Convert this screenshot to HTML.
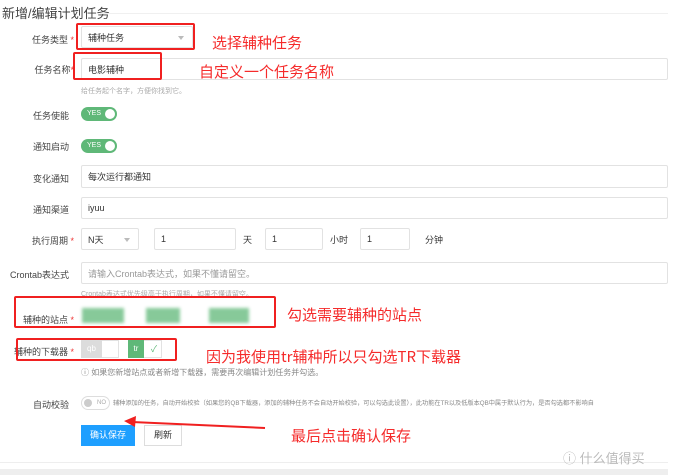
<!DOCTYPE html>
<html><head><meta charset="utf-8"><style>
*{margin:0;padding:0;box-sizing:border-box}
body{width:686px;height:475px;background:#fff;position:relative;overflow:hidden;font-family:"Liberation Sans","Noto Sans CJK SC",sans-serif;color:#333}
.a{position:absolute;white-space:nowrap}
.lbl{position:absolute;font-size:9px;color:#444;text-align:right;width:100px;left:-26px;white-space:nowrap}
.star{color:#e33}
.inp{position:absolute;border:1px solid #e2e2e2;border-radius:2px;background:#fff;font-size:9px;color:#333;padding-left:6px;display:flex;align-items:center}
.red{position:absolute;border:2px solid #f02020;border-radius:2px}
.ann{position:absolute;color:#f52b2b;font-size:15px;white-space:nowrap;font-family:"Noto Sans CJK SC",sans-serif}
.tog{position:absolute;border-radius:8px;background:#5fb878;height:14px;width:36px;font-size:7px;color:#fff;padding-left:6px;line-height:14px}
.tog:after{content:"";position:absolute;right:2px;top:2px;width:10px;height:10px;border-radius:50%;background:#fff}
.hint{position:absolute;font-size:7px;color:#aaa;white-space:nowrap}
.g{position:absolute;background:#5fb878;opacity:.75;filter:blur(1.5px)}
</style></head><body>
<div class="a" style="left:2px;top:3px;font-size:13px;color:#444">新增/编辑计划任务</div>
<div class="a" style="left:100px;width:568px;top:13px;height:1px;background:#f0f0f0"></div>

<div class="lbl" style="top:33px">任务类型 <span class="star">*</span></div>
<div class="inp" style="left:81px;top:26px;width:112px;height:22px">辅种任务<span style="position:absolute;right:8px;top:9px;border:3px solid transparent;border-top:4px solid #bbb"></span></div>
<div class="lbl" style="top:63px">任务名称<span class="star">*</span></div>
<div class="inp" style="left:81px;top:58px;width:587px;height:22px">电影辅种</div>
<div class="hint" style="left:81px;top:86px">给任务起个名字，方便你找到它。</div>
<div class="lbl" style="top:109px">任务使能&nbsp;&nbsp;</div>
<div class="tog" style="left:81px;top:107px">YES</div>
<div class="lbl" style="top:140px">通知启动&nbsp;&nbsp;</div>
<div class="tog" style="left:81px;top:139px">YES</div>
<div class="lbl" style="top:172px">变化通知&nbsp;&nbsp;</div>
<div class="inp" style="left:81px;top:165px;width:587px;height:23px">每次运行都通知</div>
<div class="lbl" style="top:203px">通知渠道&nbsp;&nbsp;</div>
<div class="inp" style="left:81px;top:197px;width:587px;height:22px">iyuu</div>
<div class="lbl" style="top:234px">执行周期 <span class="star">*</span></div>
<div class="inp" style="left:81px;top:228px;width:58px;height:22px">N天<span style="position:absolute;right:8px;top:9px;border:3px solid transparent;border-top:4px solid #bbb"></span></div>
<div class="inp" style="left:154px;top:228px;width:82px;height:22px">1</div>
<div class="a" style="left:243px;top:233px;font-size:9px">天</div>
<div class="inp" style="left:265px;top:228px;width:58px;height:22px">1</div>
<div class="a" style="left:330px;top:233px;font-size:9px">小时</div>
<div class="inp" style="left:360px;top:228px;width:50px;height:22px">1</div>
<div class="a" style="left:425px;top:233px;font-size:9px">分钟</div>
<div class="lbl" style="top:268px">Crontab表达式&nbsp;&nbsp;</div>
<div class="inp" style="left:81px;top:262px;width:587px;height:22px;color:#999">请输入Crontab表达式，如果不懂请留空。</div>
<div class="hint" style="left:81px;top:289px">Crontab表达式优先级高于执行周期，如果不懂请留空。</div>
<div class="lbl" style="top:313px">辅种的站点 <span class="star">*</span></div>
<div class="g" style="left:82px;top:308px;width:42px;height:15px"></div>
<div class="g" style="left:146px;top:308px;width:34px;height:15px"></div>
<div class="g" style="left:209px;top:308px;width:40px;height:15px"></div>
<div class="lbl" style="top:345px">辅种的下载器 <span class="star">*</span></div>
<div class="a" style="left:81px;top:340px;width:38px;height:18px;border:1px solid #e2e2e2"></div>
<div class="a" style="left:81px;top:340px;width:21px;height:18px;background:#dcdcdc;color:#fff;font-size:8px;text-align:center;line-height:18px">qb</div>
<div class="a" style="left:128px;top:340px;width:34px;height:18px;border:1px solid #e2e2e2;color:#5fb878;font-size:9px;text-align:right;padding-right:4px;line-height:16px">✓</div>
<div class="a" style="left:128px;top:340px;width:16px;height:18px;background:#5fb878;color:#fff;font-size:8px;text-align:center;line-height:18px">tr</div>
<div class="hint" style="left:81px;top:367px;font-size:8px;color:#888">ⓘ 如果您新增站点或者新增下载器，需要再次编辑计划任务并勾选。</div>
<div class="lbl" style="top:398px">自动校验&nbsp;&nbsp;</div>
<div class="a" style="left:81px;top:396px;width:29px;height:14px;border:1px solid #ddd;border-radius:8px;font-size:6px;color:#aaa;padding-left:15px;line-height:12px">NO</div>
<div class="a" style="left:84px;top:399px;width:8px;height:8px;border-radius:50%;background:#ccc"></div>
<div class="hint" style="left:113px;top:398px;font-size:6.2px;color:#888">辅种添加的任务，自动开始校验（如果您的QB下载器，添加的辅种任务不会自动开始校验，可以勾选此设置），此功能在TR以及低版本QB中属于默认行为，是否勾选都不影响自</div>
<div class="a" style="left:81px;top:425px;width:54px;height:21px;background:#1e9fff;color:#fff;font-size:9px;text-align:center;line-height:21px">确认保存</div>
<div class="a" style="left:144px;top:425px;width:38px;height:21px;border:1px solid #ddd;font-size:9px;text-align:center;line-height:19px">刷新</div>
<div class="a" style="left:0;top:462px;width:668px;height:1px;background:#eee"></div>
<div class="a" style="left:0;top:469px;width:668px;height:6px;background:#eee"></div>

<div class="red" style="left:76px;top:23px;width:119px;height:27px"></div>
<div class="red" style="left:73px;top:52px;width:89px;height:28px"></div>
<div class="red" style="left:14px;top:296px;width:262px;height:32px"></div>
<div class="red" style="left:16px;top:338px;width:161px;height:23px"></div>
<svg class="a" style="left:0;top:0" width="686" height="475"><line x1="265" y1="428" x2="132" y2="422" stroke="#f02020" stroke-width="2"/><polygon points="124,421 136,416 135,427" fill="#f02020"/></svg>

<div class="ann" style="left:212px;top:32px">选择辅种任务</div>
<div class="ann" style="left:199px;top:61px">自定义一个任务名称</div>
<div class="ann" style="left:287px;top:304px">勾选需要辅种的站点</div>
<div class="ann" style="left:206px;top:346px">因为我使用tr辅种所以只勾选TR下载器</div>
<div class="ann" style="left:291px;top:425px">最后点击确认保存</div>
<div class="a" style="left:563px;top:448px;font-size:13px;color:#bbb">ⓘ 什么值得买</div>
</body></html>
